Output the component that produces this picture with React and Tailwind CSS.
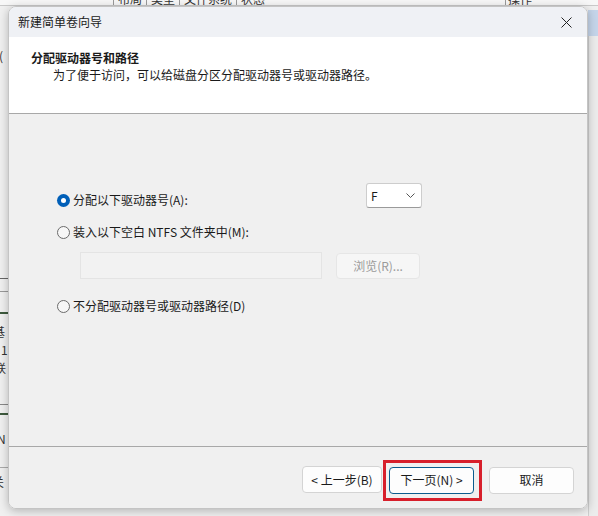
import React from "react";

// Radio bullet in the Windows 11 style
const Radio = ({ checked }) =>
  checked ? (
    <span className="flex h-[13px] w-[13px] items-center justify-center rounded-full bg-[#005fb8]">
      <span className="h-[5px] w-[5px] rounded-full bg-white" />
    </span>
  ) : (
    <span className="h-[13px] w-[13px] rounded-full border border-[#6b6b6b] bg-[#f7f7f7]" />
  );

const Button = ({ children, focused }) => (
  <button
    className={
      focused
        ? "h-[27px] w-[85px] rounded-[4px] border border-[#0b5c8e] bg-[#fdfdfd] text-[12px] text-[#1a1a1a]"
        : "h-[27px] w-[85px] rounded-[4px] border border-[#d4d4d4] bg-[#fdfdfd] text-[12px] text-[#1a1a1a]"
    }
  >
    {children}
  </button>
);

export default function App() {
  return (
    <div className="relative h-[516px] w-[598px] overflow-hidden bg-[#f0f0f0] font-['Noto_Sans_CJK_SC','Noto_Sans',sans-serif] text-[#1a1a1a]">
      {/* Disk management window behind the wizard */}
      <div className="flex h-[6px] items-end border-b border-[#c9c9c9] bg-[#f7f7f7] text-[12px] leading-[12px] text-[#333]">
        <div className="flex h-[12px] -mb-[0px] items-center pl-[113px]">
          <span className="border-l border-[#9a9a9a] px-[4px]">布局</span>
          <span className="border-l border-[#9a9a9a] px-[4px]">类型</span>
          <span className="border-l border-[#9a9a9a] px-[4px]">文件系统</span>
          <span className="border-l border-[#9a9a9a] px-[4px]">状态</span>
        </div>
        <div className="ml-auto mr-[64px] flex h-[12px] items-center">
          <span className="border-l border-[#9a9a9a] px-[2px]">操作</span>
        </div>
      </div>
      <div className="flex h-[510px]">
        <div className="flex w-[8px] flex-col overflow-hidden text-[12px] leading-[16px] text-[#333]">
          <span className="mt-[42px] -ml-[1px]">(</span>
          <div className="mt-[214px] h-px w-full bg-[#666]" />
          <div className="mt-[12px] h-px w-full bg-[#999]" />
          <div className="mt-[20px] h-[2px] w-full bg-[#3d5a3d]" />
          <span className="mt-[10px] -ml-[7px]">基</span>
          <span className="mt-[2px] ml-[1px]">1</span>
          <span className="mt-[2px] -ml-[6px]">联</span>
          <div className="mt-[28px] h-px w-full bg-[#888]" />
          <div className="mt-[8px] h-[2px] w-full bg-[#3d5a3d]" />
          <span className="mt-[16px] -ml-[3px]">N</span>
          <div className="mt-[20px] h-px w-full bg-[#aaa]" />
          <span className="mt-[6px] -ml-[8px]">关</span>
        </div>
        <div className="flex-1" />
        <div className="flex w-[10px] flex-col">
          <div className="mt-[4px] h-[26px] bg-[#c5d5ea]" />
          <div className="flex-1 border-l border-[#cfcfcf] bg-[#ececec]" />
        </div>
      </div>

      {/* Wizard dialog lying over the window */}
      <div className="absolute left-[8px] top-[6px] flex h-[503px] w-[580px] flex-col overflow-hidden rounded-[8px] border border-[#c4c4c4] shadow-[0_2px_10px_rgba(0,0,0,0.25)]">
        {/* Title bar */}
        <div className="flex h-[30px] items-center justify-between bg-[#eff1f5] pl-[9px] pr-[10px]">
          <span className="text-[12px] leading-[16px] text-[#1a1a1a]">新建简单卷向导</span>
          <svg width="11" height="11" viewBox="0 0 11 11" className="mr-[5px]">
            <path d="M0.5 0.5 L10.5 10.5 M10.5 0.5 L0.5 10.5" stroke="#222" strokeWidth="1" fill="none" />
          </svg>
        </div>

        {/* Header */}
        <div className="flex h-[77px] flex-col border-b border-[#a8a8a8] bg-white pl-[22px] pt-[13px]">
          <span className="text-[12px] font-bold leading-[16px]">分配驱动器号和路径</span>
          <span className="ml-[22px] mt-[1px] text-[12px] leading-[16px]">
            为了便于访问，可以给磁盘分区分配驱动器号或驱动器路径。
          </span>
        </div>

        {/* Body */}
        <div className="flex flex-1 flex-col border-b border-[#a8a8a8] bg-[#f0f0f0] pl-[48px] pt-[69px] text-[12px] leading-[16px]">
          <div className="flex h-[25px] items-start">
            <div className="flex w-[309px] items-center gap-[3px] pt-[9px]">
              <Radio checked />
              <span>分配以下驱动器号(A):</span>
            </div>
            <div className="flex h-[25px] w-[56px] items-center justify-between rounded-[3px] border border-[#cdcdcd] border-b-[#9a9a9a] bg-white pl-[4px] pr-[6px]">
              <span>F</span>
              <svg width="9" height="5" viewBox="0 0 9 5">
                <path d="M0.5 0.5 L4.5 4.5 L8.5 0.5" stroke="#555" strokeWidth="1" fill="none" />
              </svg>
            </div>
          </div>
          <div className="mt-[16px] flex items-center gap-[3px]">
            <Radio />
            <span>装入以下空白 NTFS 文件夹中(M):</span>
          </div>
          <div className="ml-[23px] mt-[12px] flex items-center gap-[14px]">
            <div className="h-[27px] w-[242px] border border-[#e4e4e4] bg-[#f2f2f2]" />
            <div className="flex h-[26px] w-[84px] items-center justify-center rounded-[4px] border border-[#e6e6e6] bg-[#f6f6f6] text-[#9a9a9a]">
              浏览(R)...
            </div>
          </div>
          <div className="mt-[19px] flex items-center gap-[3px]">
            <Radio />
            <span>不分配驱动器号或驱动器路径(D)</span>
          </div>
        </div>

        {/* Footer buttons */}
        <div className="flex h-[61px] justify-end bg-[#f0f0f0] pr-[13px] pt-[19px]">
          <div className="flex items-start">
            <button className="h-[27px] w-[80px] rounded-[4px] border border-[#d4d4d4] bg-[#fdfdfd] text-[12px] text-[#1a1a1a]">
              &lt; 上一步(B)
            </button>
            <div className="relative ml-[7px]">
              <Button focused>下一页(N) &gt;</Button>
              <div className="absolute -bottom-[7px] -left-[6px] -right-[8px] -top-[6px] border-[3px] border-[#d71f2b]" />
            </div>
            <div className="ml-[15px]">
              <Button>取消</Button>
            </div>
          </div>
        </div>
      </div>
    </div>
  );
}
